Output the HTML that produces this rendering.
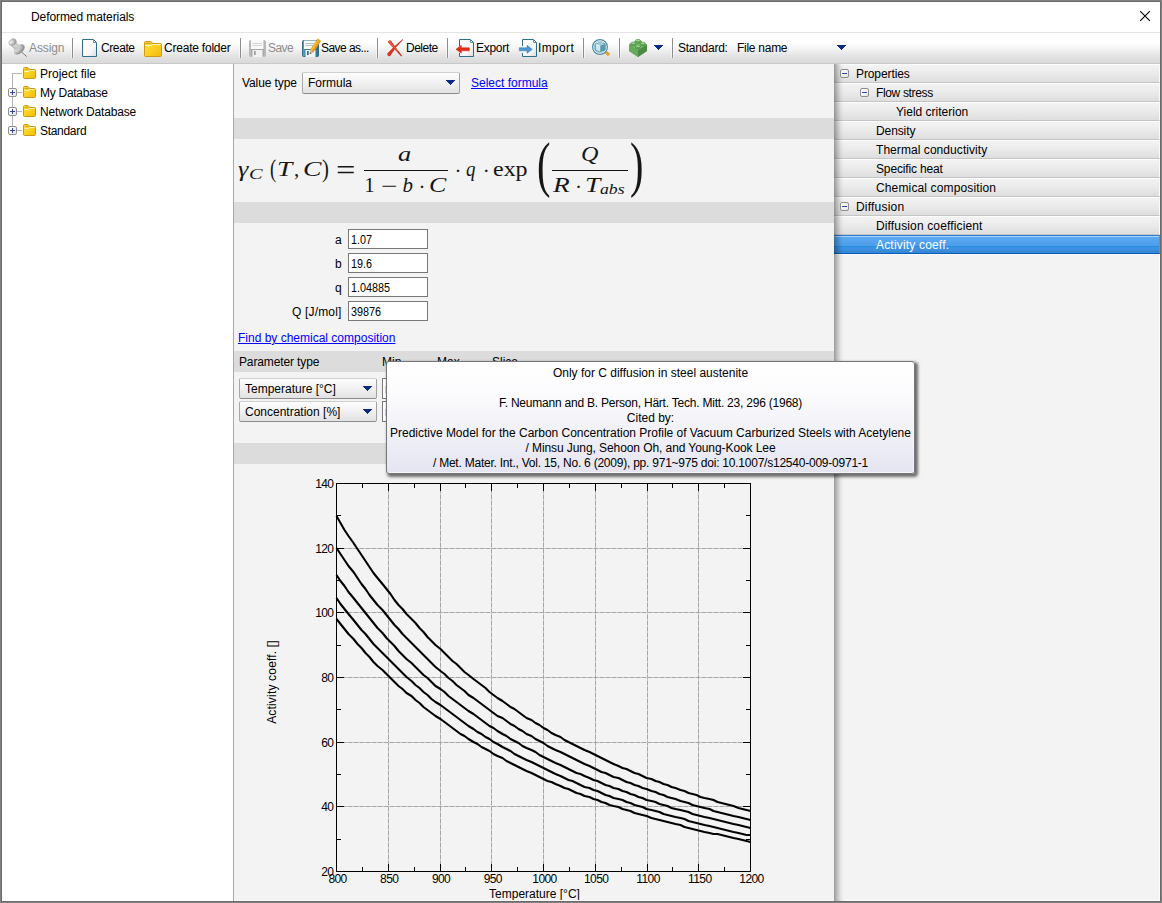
<!DOCTYPE html>
<html lang="en"><head><meta charset="utf-8"><title>Deformed materials</title>
<style>
html,body{margin:0;padding:0;background:#fff;}
body{width:1162px;height:903px;overflow:hidden;font:12px "Liberation Sans",sans-serif;color:#000;}
#win{position:relative;width:1162px;height:903px;overflow:hidden;background:#fff;}
.a{position:absolute;}
.t{position:absolute;white-space:pre;font:12px "Liberation Sans",sans-serif;line-height:20px;color:#000;}
.g{color:#8d8d8d;}
.lnk{color:#0000ff;text-decoration:underline;}
/* frame */
#bt{left:0;top:0;width:1162px;height:2px;background:linear-gradient(#818181 1px,#6b6b6b 1px);}
#bl{left:0;top:0;width:2px;height:903px;background:linear-gradient(90deg,#818181 1px,#6b6b6b 1px);}
#br{left:1160px;top:0;width:2px;height:903px;background:linear-gradient(90deg,#6b6b6b 1px,#818181 1px);}
#bb{left:0;top:901px;width:1162px;height:2px;background:linear-gradient(#6b6b6b 1px,#818181 1px);}
#title{left:2px;top:2px;width:1158px;height:30px;background:#fff;}
#tsep{left:2px;top:32px;width:1158px;height:1px;background:#e3e3e3;}
#tb{left:2px;top:33px;width:1158px;height:31px;background:linear-gradient(#ffffff 0px,#ffffff 9px,#f3f3f3 16px,#e3e3e3 23px,#dddddd 27px,#dbdbdb 30px,#c8c8c8 30px,#c8c8c8 31px);}
.sep{position:absolute;top:38px;width:1px;height:20px;background:#8d8d8d;box-shadow:1px 0 0 rgba(255,255,255,.55),-1px 0 0 rgba(255,255,255,.55);}
/* panels */
#left{left:2px;top:64px;width:231px;height:837px;background:#fff;}
#lsep{left:233px;top:64px;width:1px;height:837px;background:#a9a9a9;}
#mid{left:234px;top:64px;width:600px;height:837px;background:#f3f3f3;}
.band{position:absolute;left:234px;width:600px;background:#dcdcdc;}
#right{left:834px;top:64px;width:326px;height:837px;background:#f3f3f3;}
#rshadow{left:834px;top:64px;width:10px;height:837px;background:linear-gradient(90deg,rgba(0,0,0,0.34) 0px,rgba(0,0,0,0.34) 1px,rgba(0,0,0,0.29) 1px,rgba(0,0,0,0.29) 2px,rgba(0,0,0,0.24) 2px,rgba(0,0,0,0.24) 3px,rgba(0,0,0,0.195) 3px,rgba(0,0,0,0.195) 4px,rgba(0,0,0,0.15) 4px,rgba(0,0,0,0.15) 5px,rgba(0,0,0,0.11) 5px,rgba(0,0,0,0.11) 6px,rgba(0,0,0,0.07) 6px,rgba(0,0,0,0.07) 7px,rgba(0,0,0,0.04) 7px,rgba(0,0,0,0.04) 8px,rgba(0,0,0,0.02) 8px,rgba(0,0,0,0.02) 9px,rgba(0,0,0,0.008) 9px,rgba(0,0,0,0.008) 10px);}
.row{position:absolute;left:834px;width:326px;height:19px;box-sizing:border-box;border-top:1px solid #fdfdfd;border-bottom:1px solid #c5c5c5;border-right:1px solid #fafafa;background:linear-gradient(#f3f3f3,#eaeaea 50%,#dedede);}
.row.sel{border-top:1px solid #2c7cd3;border-bottom:1px solid #0c5bb3;border-right:1px solid #4a98e6;background:linear-gradient(#a9d4f8 0,#a9d4f8 1px,#5ba9f1 1px,#4f9dea 10px,#1f8fe0 10px,#1f8fe0 11px,#3f91e3 11px,#3a8de1 15px,#3888c4 15px,#3888c4 16px,#3389e2 16px,#3389e2 17px);}
.bx{position:absolute;width:9px;height:9px;box-sizing:border-box;border:1px solid #8e8e8e;border-radius:2px;background:linear-gradient(135deg,#fff,#e6e6e6);}
.bx i{position:absolute;left:1px;top:3px;width:5px;height:1px;background:#3446a0;}
.bx b{position:absolute;left:3px;top:1px;width:1px;height:5px;background:#3446a0;}
/* inputs */
.inp{position:absolute;box-sizing:border-box;border:1px solid #7a7a7a;background:#fff;}
.combo{position:absolute;box-sizing:border-box;border:1px solid;border-color:#d0d0d0 #a2a2a2 #8e8e8e #a8a8a8;border-radius:2px;background:linear-gradient(#fdfdfd,#f2f2f2 45%,#e2e2e2);}
.arr{position:absolute;width:0;height:0;border-left:5px solid transparent;border-right:5px solid transparent;border-top:5px solid #0a2a8c;}
/* tooltip */
#tip{left:386px;top:361px;width:529px;height:113px;box-sizing:border-box;border:1px solid #767676;border-radius:3px;background:linear-gradient(#ffffff,#fbfbfd 30%,#e4e5f1);box-shadow:inset -1px -1px 0 rgba(255,255,255,.55),2px 2px 3px 1px rgba(0,0,0,.55);}
.tl{position:absolute;left:0;width:527px;text-align:center;white-space:pre;font:12px "Liberation Sans",sans-serif;line-height:20px;color:#000;}
.fi{font-style:italic;font-family:"Liberation Serif",serif;}
.fr{font-style:normal;font-family:"Liberation Serif",serif;white-space:pre;}
#formula span{line-height:30px;white-space:pre;color:#161616;transform-origin:0 0;display:block;}

</style></head>
<body>
<div id="win">
<div class="a" id="title"></div>
<div class="a" id="tsep"></div>
<div class="a" id="tb"></div>
<div class="t" style="left:31px;top:7px;letter-spacing:-0.08px">Deformed materials</div>
<svg class="a" style="left:1139px;top:10px" width="12" height="12" viewBox="0 0 12 12"><path d="M1.2 1.2L10.8 10.8M10.8 1.2L1.2 10.8" stroke="#000" stroke-width="1.1" fill="none"/></svg>

<!-- toolbar separators -->
<div class="sep" style="left:72px"></div>
<div class="sep" style="left:240px"></div>
<div class="sep" style="left:377px"></div>
<div class="sep" style="left:447px"></div>
<div class="sep" style="left:583px"></div>
<div class="sep" style="left:619px"></div>
<div class="sep" style="left:672px"></div>

<!-- pin (assign) -->
<svg class="a" style="left:6px;top:36px" width="24" height="24" viewBox="6 36 24 24">
<defs><radialGradient id="pg" cx=".35" cy=".3" r=".75"><stop offset="0" stop-color="#f4f4f4"/><stop offset=".55" stop-color="#bcbcbc"/><stop offset="1" stop-color="#8c8c8c"/></radialGradient>
<linearGradient id="pg2" x1="0" y1="1" x2="1" y2="0"><stop offset="0" stop-color="#8f8f8f"/><stop offset=".5" stop-color="#d9d9d9"/><stop offset="1" stop-color="#a0a0a0"/></linearGradient></defs>
<path d="M21.5 52L26.8 56.6" stroke="#7d7d7d" stroke-width="1"/>
<ellipse cx="19.6" cy="49.600" rx="6.300" ry="3.500" transform="rotate(-42 19.6 49.600)" fill="#9a9a9a"/>
<ellipse cx="19" cy="49" rx="6.200" ry="3.400" transform="rotate(-42 19 49)" fill="url(#pg)"/>
<path d="M10.800 45.200L15.500 50.500L20.500 46.200L15.200 41.500Z" fill="url(#pg2)"/>
<ellipse cx="17.800" cy="48" rx="3.400" ry="1.800" transform="rotate(-42 17.800 48)" fill="#c9c9c9"/>
<ellipse cx="12.600" cy="42.300" rx="4" ry="3.100" transform="rotate(-42 12.600 42.300)" fill="url(#pg)" stroke="#a9a9a9" stroke-width=".5"/>
</svg>
<div class="t g" style="left:29px;top:38px;letter-spacing:-0.1px">Assign</div>

<!-- new page (create) -->
<svg class="a" style="left:81px;top:38px" width="18" height="20" viewBox="0 0 18 20">
<defs><linearGradient id="pgr" x1="0" y1="0" x2="1" y2="1"><stop offset="0" stop-color="#fff"/><stop offset=".6" stop-color="#f8f8f8"/><stop offset="1" stop-color="#dcdcdc"/></linearGradient></defs>
<path d="M1.5 1.5H12.5L15.5 4.5V18.5H1.5Z" fill="url(#pgr)" stroke="#2d6d89" stroke-width="1"/>
<path d="M12.5 2V4.500H15" fill="none" stroke="#5d93aa" stroke-width="1"/>
</svg>
<div class="t" style="left:101px;top:38px;letter-spacing:-0.4px">Create</div>

<!-- folder (create folder) -->
<svg class="a" style="left:143px;top:39px" width="20" height="19" viewBox="143 39 20 19">
<defs><linearGradient id="fg" x1="0" y1="0" x2="1" y2="1"><stop offset="0" stop-color="#ffdf4e"/><stop offset=".5" stop-color="#fbd022"/><stop offset="1" stop-color="#f1b90b"/></linearGradient></defs>
<path d="M144.5 42.5Q144.5 41.5 145.5 41.5H150.5Q151.5 41.5 152 42.5L152.500 43.500H160.500Q161.500 43.500 161.500 44.500V55.500Q161.500 56.500 160.500 56.500H145.500Q144.500 56.500 144.500 55.500Z" fill="url(#fg)" stroke="#cc9a17" stroke-width="1"/>
<path d="M145.5 43.5H151.500" stroke="#d9a71c" stroke-width="1"/>
<path d="M145.5 42.5H151" stroke="#f3c63a" stroke-width="1"/>
<path d="M145.5 45.5H151.500L152.500 44.500H160.500" stroke="#fff4c0" stroke-width="1" fill="none"/>
</svg>
<div class="t" style="left:164px;top:38px;letter-spacing:-0.22px">Create folder</div>

<!-- save (disabled) -->
<svg class="a" style="left:248px;top:39px" width="19" height="19" viewBox="248 39 19 19">
<defs><linearGradient id="sg" x1="0" y1="0" x2="1" y2="0"><stop offset="0" stop-color="#c4c4c4"/><stop offset=".15" stop-color="#a6a6a6"/><stop offset=".85" stop-color="#a6a6a6"/><stop offset="1" stop-color="#c4c4c4"/></linearGradient></defs>
<path d="M249.500 41.500Q249.500 40.500 250.500 40.500H264.500Q265.500 40.500 265.500 41.500V55.500Q265.500 56.500 264.500 56.500H250.500Q249.500 56.500 249.500 55.500Z" fill="url(#sg)" stroke="#b9b9b9" stroke-width="1"/>
<rect x="251" y="40" width="12.500" height="9" fill="#fafafa"/>
<path d="M252.500 43.500H262M252.500 45.500H262" stroke="#d4d4d4" stroke-width="1"/>
<rect x="252.500" y="50" width="10" height="7" fill="#f2f2f2"/>
<rect x="254" y="51" width="1.700" height="4" fill="#9c9c9c"/>
</svg>
<div class="t g" style="left:268px;top:38px;letter-spacing:-0.6px">Save</div>

<!-- save as -->
<svg class="a" style="left:301px;top:38px" width="21" height="20" viewBox="301 38 21 20">
<defs><linearGradient id="sg2" x1="0" y1="0" x2="1" y2="0"><stop offset="0" stop-color="#63a6bd"/><stop offset=".2" stop-color="#3d87a3"/><stop offset=".85" stop-color="#34799a"/><stop offset="1" stop-color="#2c6b87"/></linearGradient></defs>
<path d="M302.500 41.500Q302.500 40.500 303.500 40.500H317.500Q318.500 40.500 318.500 41.500V55.500Q318.500 56.500 317.500 56.500H303.500Q302.500 56.500 302.500 55.500Z" fill="url(#sg2)" stroke="#2f6f8c" stroke-width="1"/>
<rect x="304" y="40.500" width="12" height="8.500" fill="#f6f8f9"/>
<path d="M305.500 43.500H314M305.500 45.500H314" stroke="#b9c0c4" stroke-width="1"/>
<rect x="305.500" y="50" width="10" height="7" fill="#eef2f4"/>
<rect x="307" y="51" width="1.700" height="4" fill="#2f6f8c"/>
<path d="M317.800 38.800L320.600 41L313.200 52L310.400 49.800Z" fill="#f7bf27" stroke="#d9930f" stroke-width=".6"/>
<path d="M319.300 39.900L320.600 41L313.200 52L311.900 50.900Z" fill="#e99a1c"/>
<path d="M310.400 49.800L313.200 52L309.800 54Z" fill="#f1d1a8" stroke="#b98c5a" stroke-width=".4"/>
<path d="M310.700 52.300L309.800 54L311.600 53Z" fill="#3a2a1a"/>
</svg>
<div class="t" style="left:321px;top:38px;letter-spacing:-0.55px">Save as...</div>

<!-- delete -->
<svg class="a" style="left:385px;top:37px" width="21" height="22" viewBox="385 37 21 22">
<defs><linearGradient id="dg" x1="0" y1="0" x2="1" y2="1"><stop offset="0" stop-color="#e8452c"/><stop offset="1" stop-color="#c4240f"/></linearGradient></defs>
<path d="M388.100 42.600Q387.600 41 389 40.400Q390.600 39.800 391.500 41.200Q396 48 401.900 55.600Q402.200 56.300 401.300 56.400Q395 50 388.100 42.600Z" fill="url(#dg)"/>
<path d="M387.300 53.600Q386.900 55.300 388.300 56Q389.800 56.600 390.700 55.300Q396 46.500 403.100 39.800Q403.200 39.200 402.500 39.300Q394 46 387.300 53.600Z" fill="url(#dg)"/>
<path d="M389.300 41.300Q394 47 398 51.500" stroke="#f47a62" stroke-width=".7" fill="none"/>
</svg>
<div class="t" style="left:406px;top:38px;letter-spacing:-0.5px">Delete</div>

<!-- export -->
<svg class="a" style="left:455px;top:38px" width="20" height="20" viewBox="455 38 20 20">
<path d="M459.500 39.500H470.500L473.500 42.500V56.500H459.500Z" fill="url(#pgr)" stroke="#2d6d89" stroke-width="1"/>
<path d="M470.500 40V42.500H473" fill="none" stroke="#5d93aa" stroke-width="1"/>
<rect x="458.500" y="46" width="2" height="7" fill="#f4f4f4"/>
<path d="M456 49.300L461.300 45.300V47.800H469.300V50.800H461.300V53.300Z" fill="#e22d14" stroke="#c02410" stroke-width=".5"/>
</svg>
<div class="t" style="left:476px;top:38px;letter-spacing:-0.28px">Export</div>

<!-- import -->
<svg class="a" style="left:518px;top:38px" width="20" height="20" viewBox="518 38 20 20">
<path d="M522.500 39.500H533.500L536.500 42.500V56.500H522.500Z" fill="url(#pgr)" stroke="#2d6d89" stroke-width="1"/>
<path d="M533.500 40V42.500H536" fill="none" stroke="#5d93aa" stroke-width="1"/>
<rect x="521.500" y="46" width="2" height="7" fill="#f4f4f4"/>
<path d="M532.300 49.300L527 45.300V47.800H519.300V50.800H527V53.300Z" fill="#4c97d8" stroke="#2f72b4" stroke-width=".5"/>
</svg>
<div class="t" style="left:538px;top:38px;letter-spacing:0.35px">Import</div>

<!-- magnifier -->
<svg class="a" style="left:590px;top:37px" width="23" height="22" viewBox="590 37 23 22">
<path d="M605.600 52L608.900 55.100" stroke="#eaa22a" stroke-width="3" stroke-linecap="butt"/>
<path d="M606.500 51.200L609.800 54.300" stroke="#c9861a" stroke-width=".6"/>
<circle cx="600" cy="47" r="7.400" fill="#f3f9fb" stroke="#4f8da4" stroke-width="1.200"/>
<circle cx="600" cy="47" r="5.700" fill="none" stroke="#a9d0dd" stroke-width="1"/>
<path d="M595.300 44.300L599.600 42.700L605 43.900V50L599.800 51.800L595.300 50.200Z" fill="#c4ebf2" stroke="#3b7c92" stroke-width=".8"/>
<path d="M599.800 45.600L605 43.900V50L599.800 51.800Z" fill="#5a98ad"/>
<path d="M595.300 44.300L599.600 42.700L605 43.900L599.800 45.600Z" fill="#9fd0dc"/>
<path d="M595.700 44.700L599.800 45.900V51.400" stroke="#f2fbfd" stroke-width=".7" fill="none"/>
</svg>

<!-- lego brick -->
<svg class="a" style="left:627px;top:37px" width="22" height="22" viewBox="627 37 22 22">
<path d="M629 44.500L638 39.600L647 44.500V51L638 57L629 51Z" fill="#5fa354"/>
<path d="M629 44.500L638 50V57L629 51Z" fill="#66ab5a"/>
<path d="M647 44.500L638 50V57L647 51Z" fill="#4c8b43"/>
<path d="M629 44.500L638 39.600L647 44.500L638 50Z" fill="#7dbf71"/>
<g stroke="#4a8a42" stroke-width=".5">
<path d="M635.6 40.6V42.1A2.400 1.300 0 0 0 640.4 42.1V40.6Z" fill="#5c9f52"/>
<ellipse cx="638" cy="40.6" rx="2.400" ry="1.300" fill="#9ad68e"/>
<path d="M630.8 43.3V44.8A2.400 1.300 0 0 0 635.6 44.8V43.3Z" fill="#5c9f52"/>
<ellipse cx="633.2" cy="43.3" rx="2.400" ry="1.300" fill="#9ad68e"/>
<path d="M640.4 43.3V44.8A2.400 1.300 0 0 0 645.2 44.8V43.3Z" fill="#5c9f52"/>
<ellipse cx="642.8" cy="43.3" rx="2.400" ry="1.300" fill="#9ad68e"/>
<path d="M635.6 46.2V47.7A2.400 1.300 0 0 0 640.4 47.7V46.2Z" fill="#5c9f52"/>
<ellipse cx="638" cy="46.2" rx="2.400" ry="1.300" fill="#9ad68e"/>
</g>
</svg>
<svg class="a" style="left:654px;top:45px" width="9" height="5" shape-rendering="crispEdges"><path d="M0 0H9V1H8V2H7V3H6V4H5V5H4V4H3V3H2V2H1V1H0Z" fill="#0c2a86"/></svg>

<div class="t" style="left:678px;top:38px;letter-spacing:-0.27px">Standard:</div>
<div class="t" style="left:737px;top:38px;letter-spacing:-0.27px">File name</div>
<svg class="a" style="left:837px;top:45px" width="9" height="5" shape-rendering="crispEdges"><path d="M0 0H9V1H8V2H7V3H6V4H5V5H4V4H3V3H2V2H1V1H0Z" fill="#0c2a86"/></svg>
<div class="a" id="left"></div>
<div class="a" id="lsep"></div>
<!-- tree lines -->
<div class="a" style="left:12px;top:73px;width:1px;height:58px;background:#b3b3b3"></div>
<div class="a" style="left:12px;top:73px;width:10px;height:1px;background:#b3b3b3"></div>
<div class="a" style="left:12px;top:92px;width:10px;height:1px;background:#b3b3b3"></div>
<div class="a" style="left:12px;top:111px;width:10px;height:1px;background:#b3b3b3"></div>
<div class="a" style="left:12px;top:130px;width:10px;height:1px;background:#b3b3b3"></div>
<div class="bx" style="left:8px;top:88px"><i></i><b></b></div>
<div class="bx" style="left:8px;top:107px"><i></i><b></b></div>
<div class="bx" style="left:8px;top:126px"><i></i><b></b></div>
<svg class="a" style="left:23px;top:67px" width="13" height="12"><defs><linearGradient id="fg2" x1="0" y1="0" x2="1" y2="1"><stop offset="0" stop-color="#ffdd48"/><stop offset=".5" stop-color="#fbd11f"/><stop offset="1" stop-color="#f2ba0c"/></linearGradient></defs><path d="M.5 1.500Q.5 .5 1.500 .5H4.500Q5.500 .5 6 1.500L6.300 2.500H11.500Q12.500 2.500 12.500 3.500V10.500Q12.500 11.500 11.500 11.500H1.500Q.5 11.500 .5 10.500Z" fill="url(#fg2)" stroke="#c9981a" stroke-width="1"/><path d="M1.500 2.500H5.500" stroke="#dba81a" stroke-width="1"/><path d="M1.500 1.500H5" stroke="#f4c838" stroke-width="1"/><path d="M1.500 4.500H5.800L6.500 3.500H11.500" stroke="#fff4c0" stroke-width="1" fill="none"/></svg>
<svg class="a" style="left:23px;top:86px" width="13" height="12"><path d="M.5 1.500Q.5 .5 1.500 .5H4.500Q5.500 .5 6 1.500L6.300 2.500H11.500Q12.500 2.500 12.500 3.500V10.500Q12.500 11.500 11.500 11.500H1.500Q.5 11.500 .5 10.500Z" fill="url(#fg2)" stroke="#c9981a" stroke-width="1"/><path d="M1.500 2.500H5.500" stroke="#dba81a" stroke-width="1"/><path d="M1.500 1.500H5" stroke="#f4c838" stroke-width="1"/><path d="M1.500 4.500H5.800L6.500 3.500H11.500" stroke="#fff4c0" stroke-width="1" fill="none"/></svg>
<svg class="a" style="left:23px;top:105px" width="13" height="12"><path d="M.5 1.500Q.5 .5 1.500 .5H4.500Q5.500 .5 6 1.500L6.300 2.500H11.500Q12.500 2.500 12.500 3.500V10.500Q12.500 11.500 11.500 11.500H1.500Q.5 11.500 .5 10.500Z" fill="url(#fg2)" stroke="#c9981a" stroke-width="1"/><path d="M1.500 2.500H5.500" stroke="#dba81a" stroke-width="1"/><path d="M1.500 1.500H5" stroke="#f4c838" stroke-width="1"/><path d="M1.500 4.500H5.800L6.500 3.500H11.500" stroke="#fff4c0" stroke-width="1" fill="none"/></svg>
<svg class="a" style="left:23px;top:124px" width="13" height="12"><path d="M.5 1.500Q.5 .5 1.500 .5H4.500Q5.500 .5 6 1.500L6.300 2.500H11.500Q12.500 2.500 12.500 3.500V10.500Q12.500 11.500 11.500 11.500H1.500Q.5 11.500 .5 10.500Z" fill="url(#fg2)" stroke="#c9981a" stroke-width="1"/><path d="M1.500 2.500H5.500" stroke="#dba81a" stroke-width="1"/><path d="M1.500 1.500H5" stroke="#f4c838" stroke-width="1"/><path d="M1.500 4.500H5.800L6.500 3.500H11.500" stroke="#fff4c0" stroke-width="1" fill="none"/></svg>
<div class="t" style="left:40px;top:64px">Project file</div>
<div class="t" style="left:40px;top:83px;letter-spacing:-0.28px">My Database</div>
<div class="t" style="left:40px;top:102px;letter-spacing:-0.17px">Network Database</div>
<div class="t" style="left:40px;top:121px;letter-spacing:-0.3px">Standard</div>
<div class="a" id="mid"></div>
<div class="band" style="top:118px;height:21px"></div>
<div class="band" style="top:202px;height:21px"></div>
<div class="band" style="top:351px;height:21px"></div>
<div class="band" style="top:443px;height:21px"></div>
<div class="t" style="left:242px;top:73px;letter-spacing:-0.1px">Value type</div>
<div class="combo" style="left:302px;top:72px;width:158px;height:22px"></div>
<div class="t" style="left:308px;top:73px">Formula</div>
<svg class="a" style="left:446px;top:80px" width="9" height="5" shape-rendering="crispEdges"><path d="M0 0H9V1H8V2H7V3H6V4H5V5H4V4H3V3H2V2H1V1H0Z" fill="#0c2a86"/></svg>
<div class="t lnk" style="left:471px;top:73px">Select formula</div>

<!-- formula -->
<div id="formula">
<span class="a fi" style="left:237.8px;top:154.0px;font-size:21px;transform:scale(1.250,1.000)">γ</span>
<span class="a fi" style="left:249.3px;top:158.7px;font-size:14.5px;transform:scale(1.400,1.000)">C</span>
<span class="a fr" style="left:270.2px;top:154.3px;font-size:25.5px;transform:scale(0.729,1.000)">(</span>
<span class="a fi" style="left:276.6px;top:154.2px;font-size:21px;transform:scale(1.308,1.000)">T</span>
<span class="a fr" style="left:294.0px;top:153.6px;font-size:21px">,</span>
<span class="a fi" style="left:303.1px;top:154.4px;font-size:21px;transform:scale(1.315,1.000)">C</span>
<span class="a fr" style="left:322.2px;top:154.3px;font-size:25.5px;transform:scale(0.814,1.000)">)</span>
<span class="a fr" style="left:335.6px;top:149.4px;font-size:21px;transform:scale(1.640,1.400)">=</span>
<span class="a fi" style="left:398.4px;top:138.9px;font-size:21px;transform:scale(1.256,1.000)">a</span>
<span class="a fr" style="left:364.2px;top:170.0px;font-size:21px">1</span>
<span class="a fr" style="left:380.6px;top:171.0px;font-size:21px;transform:scale(1.390,1.000)">−</span>
<span class="a fi" style="left:402.4px;top:170.2px;font-size:21px">b</span>
<span class="a fr" style="left:418.4px;top:171.5px;font-size:21px">·</span>
<span class="a fi" style="left:428.8px;top:170.2px;font-size:21px;transform:scale(1.231,1.000)">C</span>
<span class="a fr" style="left:454.6px;top:155.6px;font-size:21px">·</span>
<span class="a fi" style="left:466.2px;top:154.4px;font-size:21px;transform:scale(0.900,1.000)">q</span>
<span class="a fr" style="left:482.7px;top:155.6px;font-size:21px">·</span>
<span class="a fr" style="left:493.1px;top:154.2px;font-size:21px;transform:scale(1.141,1.000)">exp</span>
<span class="a fi" style="left:581.1px;top:139.1px;font-size:21px;transform:scale(1.150,1.000)">Q</span>
<span class="a fi" style="left:553.4px;top:170.0px;font-size:21px;transform:scale(1.300,1.000)">R</span>
<span class="a fr" style="left:575.0px;top:171.5px;font-size:21px">·</span>
<span class="a fi" style="left:585.1px;top:170.0px;font-size:21px;transform:scale(1.308,1.000)">T</span>
<span class="a fi" style="left:600.4px;top:174.4px;font-size:14.5px;transform:scale(1.220,1.000)">abs</span>
<span class="a fr" style="left:536.5px;top:126.2px;font-size:24px;transform:scale(1.683,2.548)">(</span>
<span class="a fr" style="left:629.5px;top:126.2px;font-size:24px;transform:scale(1.683,2.548)">)</span>
<div class="a" style="left:364px;top:170px;width:84px;height:1px;background:#111"></div>
<div class="a" style="left:552px;top:170px;width:76px;height:1px;background:#111"></div>
</div>

<!-- params -->
<div class="t" style="left:335px;top:230px">a</div>
<div class="t" style="left:335px;top:254px">b</div>
<div class="t" style="left:335px;top:278px">q</div>
<div class="t" style="left:292px;top:302px;letter-spacing:0.17px">Q [J/mol]</div>
<div class="inp" style="left:348px;top:229px;width:80px;height:20px"></div>
<div class="inp" style="left:348px;top:253px;width:80px;height:20px"></div>
<div class="inp" style="left:348px;top:277px;width:80px;height:20px"></div>
<div class="inp" style="left:348px;top:301px;width:80px;height:20px"></div>
<div class="t" style="left:351px;top:230px;transform:scaleX(0.9);transform-origin:0 0">1.07</div>
<div class="t" style="left:351px;top:254px;transform:scaleX(0.9);transform-origin:0 0">19.6</div>
<div class="t" style="left:351px;top:278px;transform:scaleX(0.9);transform-origin:0 0">1.04885</div>
<div class="t" style="left:351px;top:302px;transform:scaleX(0.9);transform-origin:0 0">39876</div>
<div class="t lnk" style="left:238px;top:328px">Find by chemical composition</div>

<div class="t" style="left:239px;top:352px;letter-spacing:-0.13px">Parameter type</div>
<div class="t" style="left:382px;top:352px">Min</div>
<div class="t" style="left:437px;top:352px">Max</div>
<div class="t" style="left:492px;top:352px">Slice</div>
<div class="combo" style="left:239px;top:378px;width:138px;height:21px"></div>
<div class="combo" style="left:239px;top:401px;width:138px;height:21px"></div>
<div class="t" style="left:245px;top:379px">Temperature [°C]</div>
<div class="t" style="left:245px;top:402px">Concentration [%]</div>
<svg class="a" style="left:363px;top:386px" width="9" height="5" shape-rendering="crispEdges"><path d="M0 0H9V1H8V2H7V3H6V4H5V5H4V4H3V3H2V2H1V1H0Z" fill="#0c2a86"/></svg>
<svg class="a" style="left:363px;top:409px" width="9" height="5" shape-rendering="crispEdges"><path d="M0 0H9V1H8V2H7V3H6V4H5V5H4V4H3V3H2V2H1V1H0Z" fill="#0c2a86"/></svg>
<div class="inp" style="left:382px;top:378px;width:50px;height:21px"></div>
<div class="inp" style="left:382px;top:401px;width:50px;height:21px"></div>
<div class="a" style="left:385px;top:386px;width:1px;height:7px;background:#f6cfa0"></div>
<div class="a" style="left:385px;top:409px;width:1px;height:7px;background:#f6cfa0"></div>
<svg class="a" style="left:234px;top:464px" width="600" height="437" viewBox="234 464 600 437" shape-rendering="crispEdges" font-family="Liberation Sans, sans-serif" font-size="12">
<path d="M388.5 483V871" stroke="#c8c8c8" stroke-width="1" fill="none"/>
<path d="M388.5 483V871" stroke="#a6a6a6" stroke-width="1" stroke-dasharray="4 2" fill="none"/>
<path d="M440.5 483V871" stroke="#c8c8c8" stroke-width="1" fill="none"/>
<path d="M440.5 483V871" stroke="#a6a6a6" stroke-width="1" stroke-dasharray="4 2" fill="none"/>
<path d="M491.5 483V871" stroke="#c8c8c8" stroke-width="1" fill="none"/>
<path d="M491.5 483V871" stroke="#a6a6a6" stroke-width="1" stroke-dasharray="4 2" fill="none"/>
<path d="M543.5 483V871" stroke="#c8c8c8" stroke-width="1" fill="none"/>
<path d="M543.5 483V871" stroke="#a6a6a6" stroke-width="1" stroke-dasharray="4 2" fill="none"/>
<path d="M595.5 483V871" stroke="#c8c8c8" stroke-width="1" fill="none"/>
<path d="M595.5 483V871" stroke="#a6a6a6" stroke-width="1" stroke-dasharray="4 2" fill="none"/>
<path d="M647.5 483V871" stroke="#c8c8c8" stroke-width="1" fill="none"/>
<path d="M647.5 483V871" stroke="#a6a6a6" stroke-width="1" stroke-dasharray="4 2" fill="none"/>
<path d="M698.5 483V871" stroke="#c8c8c8" stroke-width="1" fill="none"/>
<path d="M698.5 483V871" stroke="#a6a6a6" stroke-width="1" stroke-dasharray="4 2" fill="none"/>
<path d="M336 806.5H750" stroke="#c8c8c8" stroke-width="1" fill="none"/>
<path d="M336 806.5H750" stroke="#a6a6a6" stroke-width="1" stroke-dasharray="4 2" fill="none"/>
<path d="M336 742.5H750" stroke="#c8c8c8" stroke-width="1" fill="none"/>
<path d="M336 742.5H750" stroke="#a6a6a6" stroke-width="1" stroke-dasharray="4 2" fill="none"/>
<path d="M336 677.5H750" stroke="#c8c8c8" stroke-width="1" fill="none"/>
<path d="M336 677.5H750" stroke="#a6a6a6" stroke-width="1" stroke-dasharray="4 2" fill="none"/>
<path d="M336 612.5H750" stroke="#c8c8c8" stroke-width="1" fill="none"/>
<path d="M336 612.5H750" stroke="#a6a6a6" stroke-width="1" stroke-dasharray="4 2" fill="none"/>
<path d="M336 548.5H750" stroke="#c8c8c8" stroke-width="1" fill="none"/>
<path d="M336 548.5H750" stroke="#a6a6a6" stroke-width="1" stroke-dasharray="4 2" fill="none"/>
<polyline points="336.5,619.0 340.5,624.0 344.5,629.0 348.5,634.0 353.5,639.0 357.5,644.0 361.5,648.0 365.5,653.0 369.5,657.0 373.5,662.0 377.5,666.0 382.5,670.0 386.5,674.0 390.5,678.0 394.5,682.0 398.5,686.0 402.5,689.0 406.5,693.0 411.5,696.0 415.5,700.0 419.5,703.0 423.5,707.0 427.5,710.0 431.5,713.0 435.5,716.0 440.5,719.0 444.5,722.0 448.5,725.0 452.5,728.0 456.5,731.0 460.5,734.0 464.5,736.0 468.5,739.0 473.5,742.0 477.5,744.0 481.5,747.0 485.5,749.0 489.5,751.0 493.5,754.0 497.5,756.0 502.5,758.0 506.5,761.0 510.5,763.0 514.5,765.0 518.5,767.0 522.5,769.0 526.5,771.0 531.5,773.0 535.5,775.0 539.5,777.0 543.5,779.0 547.5,781.0 551.5,782.0 555.5,784.0 560.5,786.0 564.5,788.0 568.5,789.0 572.5,791.0 576.5,793.0 580.5,794.0 584.5,796.0 589.5,797.0 593.5,799.0 597.5,800.0 601.5,802.0 605.5,803.0 609.5,805.0 613.5,806.0 618.5,807.0 622.5,809.0 626.5,810.0 630.5,811.0 634.5,813.0 638.5,814.0 642.5,815.0 646.5,816.0 651.5,818.0 655.5,819.0 659.5,820.0 663.5,821.0 667.5,822.0 671.5,823.0 675.5,824.0 680.5,825.0 684.5,827.0 688.5,828.0 692.5,829.0 696.5,830.0 700.5,831.0 704.5,832.0 709.5,833.0 713.5,834.0 717.5,834.0 721.5,835.0 725.5,836.0 729.5,837.0 733.5,838.0 738.5,839.0 742.5,840.0 746.5,841.0 750.5,842.0" stroke="#000" stroke-width="2.1" fill="none" stroke-linejoin="round" shape-rendering="geometricPrecision"/>
<polyline points="336.5,598.0 340.5,604.0 344.5,609.0 348.5,614.0 353.5,620.0 357.5,625.0 361.5,630.0 365.5,634.0 369.5,639.0 373.5,644.0 377.5,648.0 382.5,653.0 386.5,657.0 390.5,661.0 394.5,665.0 398.5,669.0 402.5,673.0 406.5,677.0 411.5,681.0 415.5,685.0 419.5,688.0 423.5,692.0 427.5,695.0 431.5,699.0 435.5,702.0 440.5,705.0 444.5,708.0 448.5,711.0 452.5,714.0 456.5,717.0 460.5,720.0 464.5,723.0 468.5,726.0 473.5,729.0 477.5,732.0 481.5,734.0 485.5,737.0 489.5,739.0 493.5,742.0 497.5,744.0 502.5,747.0 506.5,749.0 510.5,751.0 514.5,754.0 518.5,756.0 522.5,758.0 526.5,760.0 531.5,762.0 535.5,764.0 539.5,766.0 543.5,768.0 547.5,770.0 551.5,772.0 555.5,774.0 560.5,776.0 564.5,778.0 568.5,780.0 572.5,781.0 576.5,783.0 580.5,785.0 584.5,787.0 589.5,788.0 593.5,790.0 597.5,791.0 601.5,793.0 605.5,795.0 609.5,796.0 613.5,798.0 618.5,799.0 622.5,800.0 626.5,802.0 630.5,803.0 634.5,805.0 638.5,806.0 642.5,807.0 646.5,809.0 651.5,810.0 655.5,811.0 659.5,812.0 663.5,814.0 667.5,815.0 671.5,816.0 675.5,817.0 680.5,818.0 684.5,819.0 688.5,821.0 692.5,822.0 696.5,823.0 700.5,824.0 704.5,825.0 709.5,826.0 713.5,827.0 717.5,828.0 721.5,829.0 725.5,830.0 729.5,831.0 733.5,832.0 738.5,833.0 742.5,834.0 746.5,835.0 750.5,835.0" stroke="#000" stroke-width="2.1" fill="none" stroke-linejoin="round" shape-rendering="geometricPrecision"/>
<polyline points="336.5,575.0 340.5,581.0 344.5,586.0 348.5,592.0 353.5,598.0 357.5,603.0 361.5,608.0 365.5,613.0 369.5,618.0 373.5,623.0 377.5,628.0 382.5,633.0 386.5,638.0 390.5,642.0 394.5,646.0 398.5,651.0 402.5,655.0 406.5,659.0 411.5,663.0 415.5,667.0 419.5,671.0 423.5,675.0 427.5,678.0 431.5,682.0 435.5,686.0 440.5,689.0 444.5,692.0 448.5,696.0 452.5,699.0 456.5,702.0 460.5,705.0 464.5,708.0 468.5,711.0 473.5,714.0 477.5,717.0 481.5,720.0 485.5,723.0 489.5,726.0 493.5,728.0 497.5,731.0 502.5,734.0 506.5,736.0 510.5,739.0 514.5,741.0 518.5,743.0 522.5,746.0 526.5,748.0 531.5,750.0 535.5,752.0 539.5,755.0 543.5,757.0 547.5,759.0 551.5,761.0 555.5,763.0 560.5,765.0 564.5,767.0 568.5,769.0 572.5,771.0 576.5,773.0 580.5,774.0 584.5,776.0 589.5,778.0 593.5,780.0 597.5,781.0 601.5,783.0 605.5,785.0 609.5,786.0 613.5,788.0 618.5,789.0 622.5,791.0 626.5,792.0 630.5,794.0 634.5,795.0 638.5,797.0 642.5,798.0 646.5,800.0 651.5,801.0 655.5,802.0 659.5,804.0 663.5,805.0 667.5,806.0 671.5,808.0 675.5,809.0 680.5,810.0 684.5,811.0 688.5,812.0 692.5,814.0 696.5,815.0 700.5,816.0 704.5,817.0 709.5,818.0 713.5,819.0 717.5,820.0 721.5,821.0 725.5,822.0 729.5,823.0 733.5,824.0 738.5,825.0 742.5,826.0 746.5,827.0 750.5,828.0" stroke="#000" stroke-width="2.1" fill="none" stroke-linejoin="round" shape-rendering="geometricPrecision"/>
<polyline points="336.5,548.0 340.5,554.0 344.5,560.0 348.5,566.0 353.5,572.0 357.5,578.0 361.5,584.0 365.5,589.0 369.5,595.0 373.5,600.0 377.5,605.0 382.5,610.0 386.5,615.0 390.5,620.0 394.5,625.0 398.5,629.0 402.5,634.0 406.5,638.0 411.5,643.0 415.5,647.0 419.5,651.0 423.5,655.0 427.5,659.0 431.5,663.0 435.5,667.0 440.5,671.0 444.5,674.0 448.5,678.0 452.5,681.0 456.5,685.0 460.5,688.0 464.5,691.0 468.5,695.0 473.5,698.0 477.5,701.0 481.5,704.0 485.5,707.0 489.5,710.0 493.5,713.0 497.5,716.0 502.5,718.0 506.5,721.0 510.5,724.0 514.5,726.0 518.5,729.0 522.5,731.0 526.5,734.0 531.5,736.0 535.5,739.0 539.5,741.0 543.5,743.0 547.5,746.0 551.5,748.0 555.5,750.0 560.5,752.0 564.5,754.0 568.5,756.0 572.5,758.0 576.5,760.0 580.5,762.0 584.5,764.0 589.5,766.0 593.5,768.0 597.5,770.0 601.5,772.0 605.5,773.0 609.5,775.0 613.5,777.0 618.5,778.0 622.5,780.0 626.5,782.0 630.5,783.0 634.5,785.0 638.5,786.0 642.5,788.0 646.5,789.0 651.5,791.0 655.5,792.0 659.5,794.0 663.5,795.0 667.5,797.0 671.5,798.0 675.5,799.0 680.5,801.0 684.5,802.0 688.5,803.0 692.5,805.0 696.5,806.0 700.5,807.0 704.5,808.0 709.5,809.0 713.5,811.0 717.5,812.0 721.5,813.0 725.5,814.0 729.5,815.0 733.5,816.0 738.5,817.0 742.5,818.0 746.5,819.0 750.5,820.0" stroke="#000" stroke-width="2.1" fill="none" stroke-linejoin="round" shape-rendering="geometricPrecision"/>
<polyline points="336.5,516.0 340.5,523.0 344.5,530.0 348.5,536.0 353.5,543.0 357.5,549.0 361.5,555.0 365.5,561.0 369.5,567.0 373.5,573.0 377.5,578.0 382.5,584.0 386.5,589.0 390.5,594.0 394.5,600.0 398.5,605.0 402.5,609.0 406.5,614.0 411.5,619.0 415.5,623.0 419.5,628.0 423.5,632.0 427.5,637.0 431.5,641.0 435.5,645.0 440.5,649.0 444.5,653.0 448.5,657.0 452.5,661.0 456.5,664.0 460.5,668.0 464.5,672.0 468.5,675.0 473.5,679.0 477.5,682.0 481.5,685.0 485.5,688.0 489.5,692.0 493.5,695.0 497.5,698.0 502.5,701.0 506.5,704.0 510.5,707.0 514.5,709.0 518.5,712.0 522.5,715.0 526.5,718.0 531.5,720.0 535.5,723.0 539.5,725.0 543.5,728.0 547.5,730.0 551.5,733.0 555.5,735.0 560.5,737.0 564.5,740.0 568.5,742.0 572.5,744.0 576.5,746.0 580.5,748.0 584.5,750.0 589.5,752.0 593.5,754.0 597.5,756.0 601.5,758.0 605.5,760.0 609.5,762.0 613.5,764.0 618.5,766.0 622.5,768.0 626.5,769.0 630.5,771.0 634.5,773.0 638.5,774.0 642.5,776.0 646.5,778.0 651.5,779.0 655.5,781.0 659.5,782.0 663.5,784.0 667.5,785.0 671.5,787.0 675.5,788.0 680.5,790.0 684.5,791.0 688.5,793.0 692.5,794.0 696.5,795.0 700.5,797.0 704.5,798.0 709.5,799.0 713.5,800.0 717.5,802.0 721.5,803.0 725.5,804.0 729.5,805.0 733.5,806.0 738.5,808.0 742.5,809.0 746.5,810.0 750.5,811.0" stroke="#000" stroke-width="2.1" fill="none" stroke-linejoin="round" shape-rendering="geometricPrecision"/>
<path d="M336.5 483.5H750.5V871.5H336.5Z" stroke="#000" stroke-width="1" fill="none"/>
<path d="M362.5 483v5M362.5 872v-5M388.5 483v8M388.5 872v-8M414.5 483v5M414.5 872v-5M440.5 483v8M440.5 872v-8M465.5 483v5M465.5 872v-5M491.5 483v8M491.5 872v-8M517.5 483v5M517.5 872v-5M543.5 483v8M543.5 872v-8M569.5 483v5M569.5 872v-5M595.5 483v8M595.5 872v-8M621.5 483v5M621.5 872v-5M647.5 483v8M647.5 872v-8M672.5 483v5M672.5 872v-5M698.5 483v8M698.5 872v-8M724.5 483v5M724.5 872v-5M336 839.5h5M751 839.5h-5M336 806.5h8M751 806.5h-8M336 774.5h5M751 774.5h-5M336 742.5h8M751 742.5h-8M336 709.5h5M751 709.5h-5M336 677.5h8M751 677.5h-8M336 645.5h5M751 645.5h-5M336 612.5h8M751 612.5h-8M336 580.5h5M751 580.5h-5M336 548.5h8M751 548.5h-8M336 515.5h5M751 515.5h-5" stroke="#000" stroke-width="1" fill="none"/>
<text x="337.5" y="883" text-anchor="middle" letter-spacing="-0.6" fill="#000">800</text>
<text x="389.2" y="883" text-anchor="middle" letter-spacing="-0.6" fill="#000">850</text>
<text x="441.0" y="883" text-anchor="middle" letter-spacing="-0.6" fill="#000">900</text>
<text x="492.8" y="883" text-anchor="middle" letter-spacing="-0.6" fill="#000">950</text>
<text x="544.5" y="883" text-anchor="middle" letter-spacing="-0.6" fill="#000">1000</text>
<text x="596.2" y="883" text-anchor="middle" letter-spacing="-0.6" fill="#000">1050</text>
<text x="648.0" y="883" text-anchor="middle" letter-spacing="-0.6" fill="#000">1100</text>
<text x="699.8" y="883" text-anchor="middle" letter-spacing="-0.6" fill="#000">1150</text>
<text x="751.5" y="883" text-anchor="middle" letter-spacing="-0.6" fill="#000">1200</text>
<text x="333.4" y="876.0" text-anchor="end" letter-spacing="-0.6" fill="#000">20</text>
<text x="333.4" y="811.3" text-anchor="end" letter-spacing="-0.6" fill="#000">40</text>
<text x="333.4" y="746.7" text-anchor="end" letter-spacing="-0.6" fill="#000">60</text>
<text x="333.4" y="682.0" text-anchor="end" letter-spacing="-0.6" fill="#000">80</text>
<text x="333.4" y="617.3" text-anchor="end" letter-spacing="-0.6" fill="#000">100</text>
<text x="333.4" y="552.7" text-anchor="end" letter-spacing="-0.6" fill="#000">120</text>
<text x="333.4" y="488.0" text-anchor="end" letter-spacing="-0.6" fill="#000">140</text>
<text x="534.5" y="898" text-anchor="middle" fill="#000">Temperature [°C]</text>
<text transform="translate(276 682) rotate(-90)" text-anchor="middle" letter-spacing="0.18" fill="#000">Activity coeff. []</text>
</svg>
<div class="a" id="right"></div>
<div class="a" style="left:834px;top:254px;width:326px;height:1px;background:#fcfbf8"></div>
<div class="row" style="top:64px"></div>
<div class="row" style="top:83px"></div>
<div class="row" style="top:102px"></div>
<div class="row" style="top:121px"></div>
<div class="row" style="top:140px"></div>
<div class="row" style="top:159px"></div>
<div class="row" style="top:178px"></div>
<div class="row" style="top:197px"></div>
<div class="row" style="top:216px"></div>
<div class="row sel" style="top:235px"></div>
<div class="a" id="rshadow"></div>
<div class="bx" style="left:840px;top:69px"><i></i></div>
<div class="bx" style="left:860px;top:88px"><i></i></div>
<div class="bx" style="left:840px;top:202px"><i></i></div>
<div class="t" style="left:856px;top:64px;letter-spacing:-0.1px">Properties</div>
<div class="t" style="left:876px;top:83px;letter-spacing:-0.35px">Flow stress</div>
<div class="t" style="left:896px;top:102px">Yield criterion</div>
<div class="t" style="left:876px;top:121px;letter-spacing:-0.1px">Density</div>
<div class="t" style="left:876px;top:140px;letter-spacing:0.06px">Thermal conductivity</div>
<div class="t" style="left:876px;top:159px;letter-spacing:-0.15px">Specific heat</div>
<div class="t" style="left:876px;top:178px;letter-spacing:0.14px">Chemical composition</div>
<div class="t" style="left:856px;top:197px;letter-spacing:0.2px">Diffusion</div>
<div class="t" style="left:876px;top:216px;letter-spacing:0.14px">Diffusion coefficient</div>
<div class="t" style="left:876px;top:235px;letter-spacing:0.18px;color:#fff">Activity coeff.</div>
<div class="a" style="left:1159px;top:254px;width:1px;height:647px;background:#fcfcfc"></div><div class="a" style="left:844px;top:900px;width:316px;height:1px;background:#fcfcfc"></div><div class="a" style="left:234px;top:900px;width:599px;height:1px;background:#fafafa"></div>
<div class="a" id="bt"></div><div class="a" id="bl"></div><div class="a" id="br"></div><div class="a" id="bb"></div><div class="a" id="ring" style="left:0;top:0;width:1162px;height:903px;box-sizing:border-box;border:1px solid #818181"></div>
<div class="a" id="tip">
<div class="tl" style="top:1px">Only for C diffusion in steel austenite</div>
<div class="tl" style="top:31px;letter-spacing:-.22px">F. Neumann and B. Person, Härt. Tech. Mitt. 23, 296 (1968)</div>
<div class="tl" style="top:46px">Cited by:</div>
<div class="tl" style="top:61px;letter-spacing:-.02px">Predictive Model for the Carbon Concentration Profile of Vacuum Carburized Steels with Acetylene</div>
<div class="tl" style="top:76px;letter-spacing:-.08px">/ Minsu Jung, Sehoon Oh, and Young-Kook Lee</div>
<div class="tl" style="top:91px;letter-spacing:-.23px">/ Met. Mater. Int., Vol. 15, No. 6 (2009), pp. 971~975 doi: 10.1007/s12540-009-0971-1</div>
</div>
</div>
</body></html>
